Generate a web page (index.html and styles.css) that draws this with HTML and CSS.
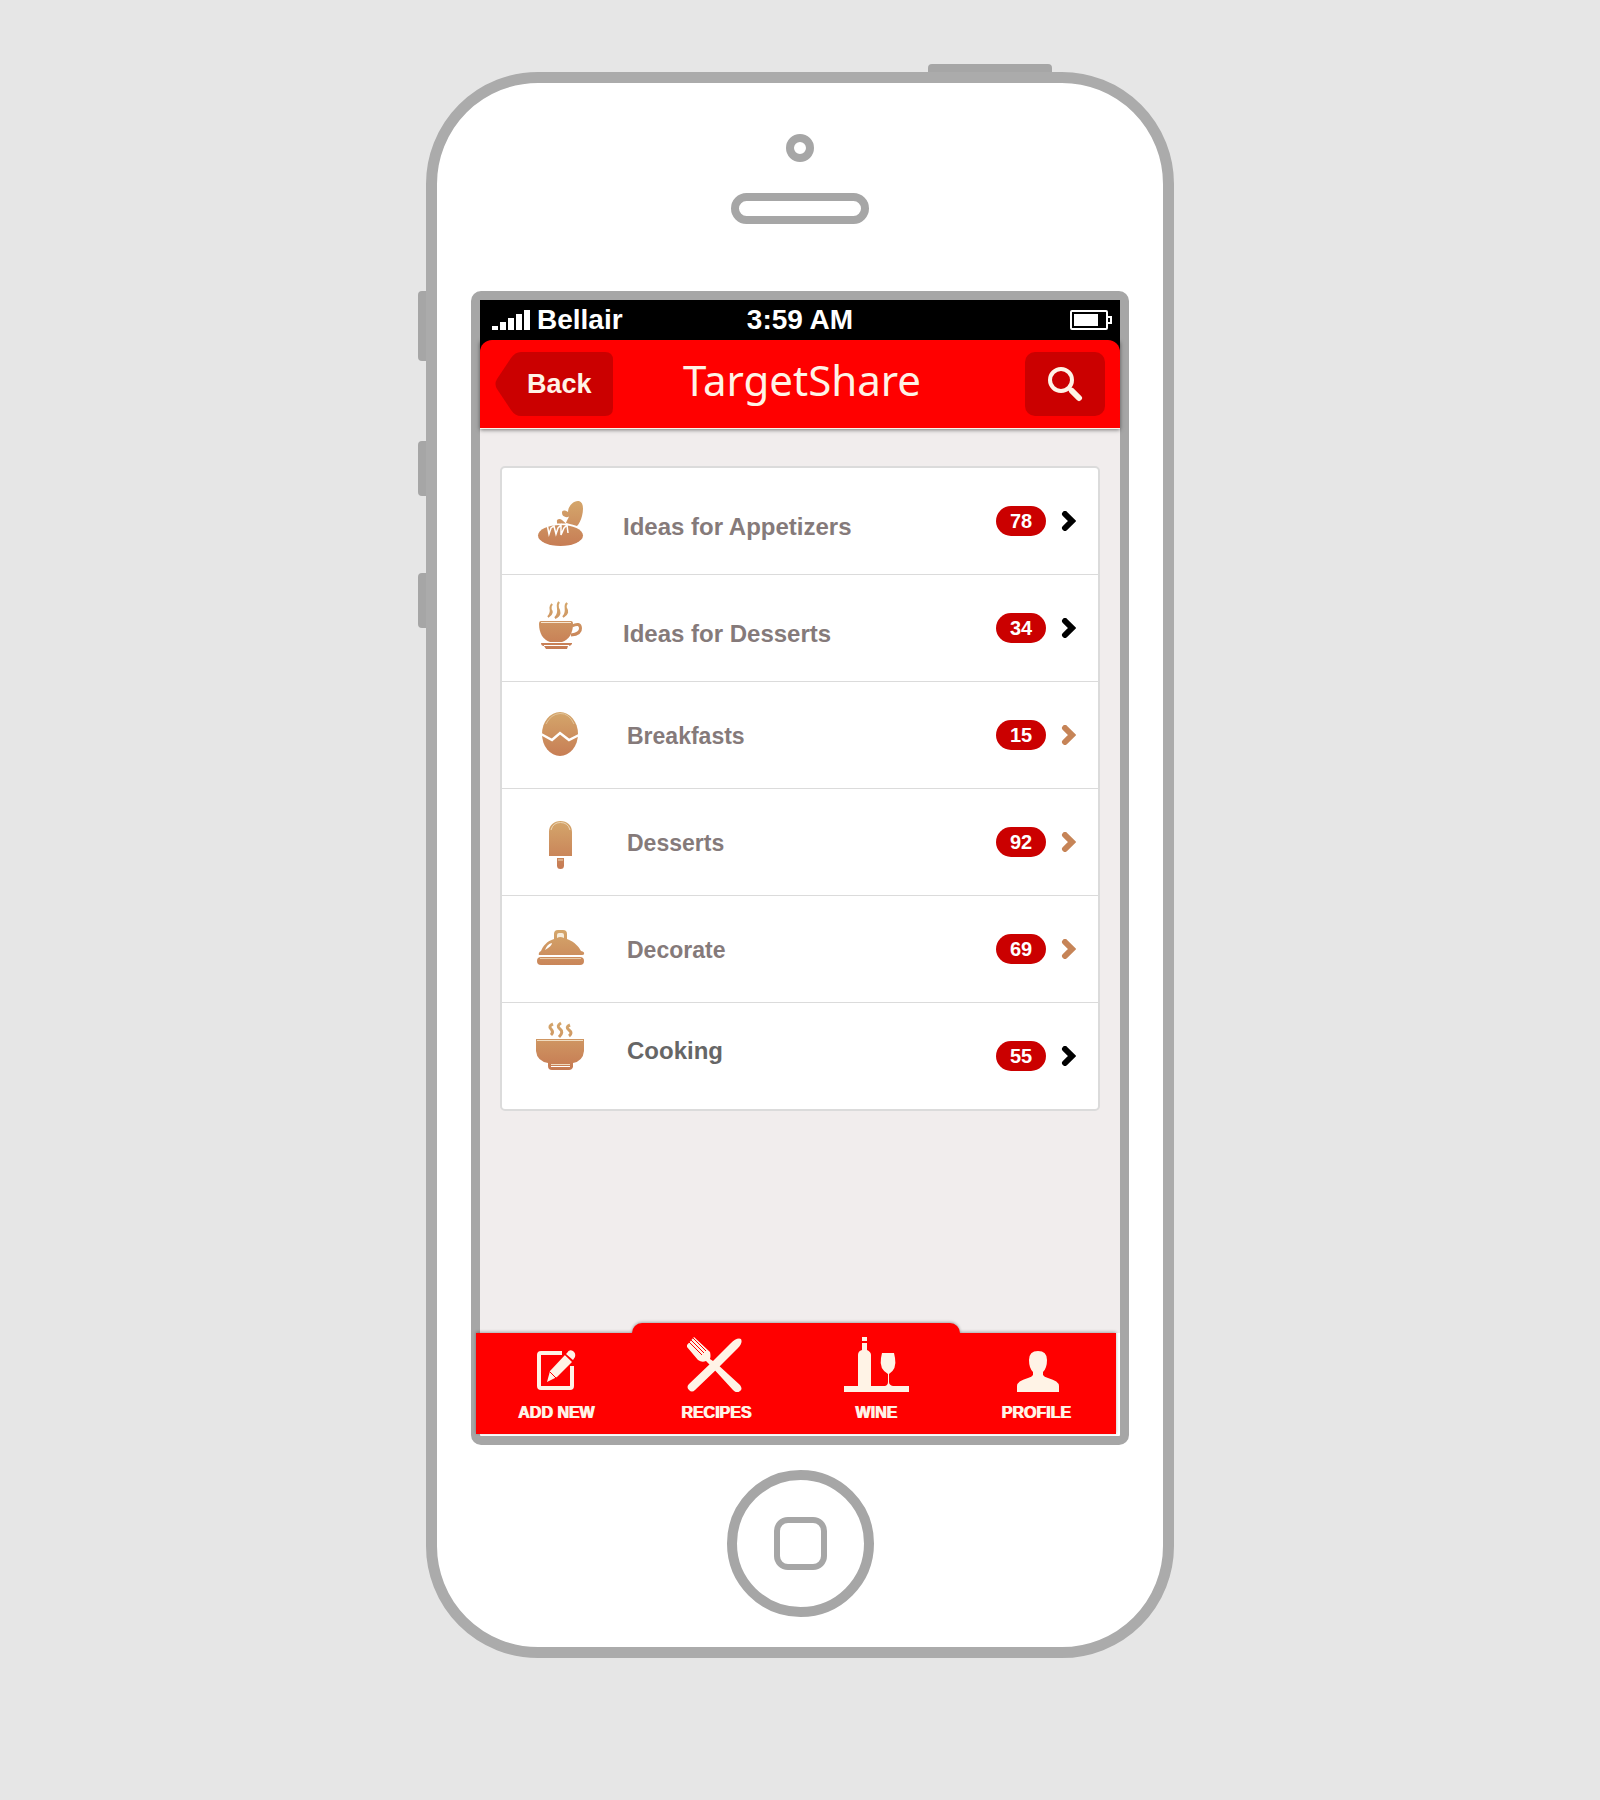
FILE: index.html
```html
<!DOCTYPE html>
<html lang="en">
<head>
<meta charset="utf-8">
<meta name="viewport" content="width=device-width, initial-scale=1">
<title>TargetShare</title>
<link rel="stylesheet" href="styles.css">
</head>
<body>
<svg class="defs" aria-hidden="true">
  <defs>
    <linearGradient id="crust" gradientUnits="userSpaceOnUse" x1="0" y1="0" x2="0" y2="48">
      <stop offset="0" stop-color="#d4a66b"/>
      <stop offset="1" stop-color="#c67a53"/>
    </linearGradient>
  </defs>
</svg>
<div class="phone">
  <span class="key key-power"></span>
  <span class="key key-mute"></span>
  <span class="key key-up"></span>
  <span class="key key-down"></span>
  <span class="camera"></span>
  <span class="speaker"></span>

  <div class="screen">
    <div class="status">
      <div class="carrier">
        <svg width="38" height="20" viewBox="0 0 38 20" fill="#fff" aria-hidden="true"><path d="M0 16h6v4H0zM8 12h6v8H8zM16 8h6v12h-6zM24 4h6v16h-6zM32 0h6v20h-6z"/></svg>
        <span>Bellair</span>
      </div>
      <span>3:59 AM</span>
      <svg class="battery" width="42" height="20" viewBox="0 0 42 20" aria-hidden="true">
        <rect x="1" y="1" width="36" height="18" rx="1" fill="none" stroke="#fff" stroke-width="2"/>
        <rect x="4" y="4" width="24" height="12" fill="#fff"/>
        <path d="M38 7h3v6h-3" fill="none" stroke="#fff" stroke-width="2"/>
      </svg>
    </div>

    <div class="header-wrap">
      <header class="header">
        <button class="back" type="button">
          <svg class="back-shape" width="118" height="64" viewBox="0 0 118 64" aria-hidden="true"><path d="M26 0H110Q118 0 118 8V56Q118 64 110 64H26Q20 64 16 58L2 37Q-1 32 2 27L16 6Q20 0 26 0Z" fill="#cb0000"/></svg>
          <span class="back-text">Back</span>
        </button>
        <h1 class="title">TargetShare</h1>
        <button class="search" type="button" aria-label="Search">
          <svg width="36" height="36" viewBox="0 0 36 36" fill="none" stroke="#fff3e6" aria-hidden="true">
            <circle cx="14" cy="14" r="11" stroke-width="4"/>
            <path d="M22 22l3 3" stroke-width="4"/>
            <path d="M25 25l7 7" stroke-width="6" stroke-linecap="round"/>
          </svg>
        </button>
      </header>
    </div>

    <main class="main">
      <ul class="card">
        <li><a class="row row-strong row-low" href="#appetizers">
          <svg class="dish" width="60" height="72" viewBox="0 0 60 72" aria-hidden="true"><g transform="translate(8 16)" fill="url(#crust)">
            <path d="M41 0C45 1 46 7 44 15C43 19 41 23 39 25L34 23.500L28 22C28 21 30 18 31 15.500C29 17 26 16 24.500 14C23 10 25 8 30 11C30 5 36-1 41 0Z"/>
            <path d="M19 21C18 18 22 17 24 19L28 22.500H19Z"/>
            <ellipse cx="22.500" cy="34.500" rx="22.500" ry="10.500"/>
            <path d="M9 23L11 33L13 27L16 25L18 33L20 27L23 24L23 34L26 27L29 24L30 32" fill="none" stroke="#fff" stroke-width="1.500"/>
          </g></svg>
          <span class="label">Ideas for Appetizers</span>
          <span class="count">78</span>
          <svg class="chevron" width="15" height="20" viewBox="0 0 15 20" aria-hidden="true"><path d="M4 3L11 10L4 17"/></svg>
        </a></li>
        <li><a class="row row-strong row-low" href="#dessert-ideas">
          <svg class="dish" width="60" height="72" viewBox="0 0 60 72" aria-hidden="true"><g transform="translate(8 10)" fill="url(#crust)">
            <path d="M14 2C10 6 16 9 10 15C15 12 14 9 12.500 7Q12 5 14 2ZM21 0C17 4 24 10 17 16C23 13 22 9 20 6Q19 3 21 0ZM29 1C25 4 31 9 25 15C30 12 30 9 28 6Q27 4 29 1Z" stroke="url(#crust)" stroke-width="2"/>
            <path d="M1 22Q1 19 3 19H33Q35 19 35 22C35 31 31 38 24 40H12C5 38 1 31 1 22Z"/>
            <path d="M3 20.500H33" stroke="#f6e8d4" stroke-width="1"/>
            <path d="M34 24Q42 20 42.500 26Q43 32 33 33" fill="none" stroke="url(#crust)" stroke-width="3"/>
            <path d="M3 41H34V42Q33 44 30 44L29 47H8L6 44Q3 44 3 41Z"/>
            <path d="M6 43.500H31" stroke="#fff" stroke-width="1"/>
          </g></svg>
          <span class="label">Ideas for Desserts</span>
          <span class="count">34</span>
          <svg class="chevron" width="15" height="20" viewBox="0 0 15 20" aria-hidden="true"><path d="M4 3L11 10L4 17"/></svg>
        </a></li>
        <li><a class="row" href="#breakfasts">
          <svg class="dish" width="60" height="72" viewBox="0 0 60 72" aria-hidden="true"><g transform="translate(12 13)" fill="url(#crust)">
            <ellipse cx="18" cy="22" rx="18" ry="22"/>
            <path d="M4 12Q9 2 18 1.500T32 12" fill="none" stroke="#e3c49a" stroke-width="1"/>
            <path d="M-1 22L10 28L18 21L27 28L37 23" fill="none" stroke="#fff" stroke-width="2.500"/>
          </g></svg>
          <span class="label">Breakfasts</span>
          <span class="count">15</span>
          <svg class="chevron" width="15" height="20" viewBox="0 0 15 20" aria-hidden="true"><path d="M4 3L11 10L4 17"/></svg>
        </a></li>
        <li><a class="row" href="#desserts">
          <svg class="dish" width="60" height="72" viewBox="0 0 60 72" aria-hidden="true"><g transform="translate(19 15)" fill="url(#crust)">
            <path d="M0 35V11C0 4 5 0 11.500 0S23 4 23 11V35ZM8 37H15V44.500A3.500 3.500 0 0 1 8 44.500Z"/>
            <path d="M2 9Q4 1.500 11.500 1.500T21 9M9 39H14" fill="none" stroke="#ecd5b5" stroke-width="1"/>
          </g></svg>
          <span class="label">Desserts</span>
          <span class="count">92</span>
          <svg class="chevron" width="15" height="20" viewBox="0 0 15 20" aria-hidden="true"><path d="M4 3L11 10L4 17"/></svg>
        </a></li>
        <li><a class="row" href="#decorate">
          <svg class="dish" width="60" height="72" viewBox="0 0 60 72" aria-hidden="true"><g transform="translate(7 17)" fill="url(#crust)">
            <path d="M17 9V4Q17 0 21 0H26Q30 0 30 4V9C38 12 42 17 44 21Q48 22 47 24Q47 25 45 25H3Q1 25 2 23Q2 22 4 21C6 16 10 11 17 9Z"/>
            <rect y="27" width="47" height="8" rx="4"/>
            <path d="M20 8V5Q20 3 22 3H25Q27 3 27 5V8Q23 6 20 8Z" fill="#f7eddc"/>
            <path d="M8 20Q10 14 15 13Q15 16 8 20Z" fill="#fff"/>
            <path d="M3 28.500H44" stroke="#e8cba8" stroke-width="1"/>
          </g></svg>
          <span class="label">Decorate</span>
          <span class="count">69</span>
          <svg class="chevron" width="15" height="20" viewBox="0 0 15 20" aria-hidden="true"><path d="M4 3L11 10L4 17"/></svg>
        </a></li>
        <li><a class="row row-strong row-high" href="#cooking">
          <svg class="dish" width="60" height="72" viewBox="0 0 60 72" aria-hidden="true"><g transform="translate(6 2)" fill="url(#crust)">
            <path d="M17 2Q12 4 15 7T15 13M25 1Q20 4 24 7T23 15M34 3Q29 5 33 8T33 14" fill="none" stroke="url(#crust)" stroke-width="3"/>
            <path d="M0 17H48V29Q47 39 37 41V45Q36 48 33 48H16Q12 48 12 44V41Q1 39 0 29Z"/>
            <path d="M1 18.500H47M15 42.500H34" stroke="#f0dcc0" stroke-width="1"/>
            <path d="M15 44.500H34" stroke="#fff" stroke-width="1"/>
          </g></svg>
          <span class="label">Cooking</span>
          <span class="count">55</span>
          <svg class="chevron" width="15" height="20" viewBox="0 0 15 20" aria-hidden="true"><path d="M4 3L11 10L4 17"/></svg>
        </a></li>
      </ul>
    </main>

    <nav class="tabs">
      <a class="tab" href="#add">
        <svg width="66" height="56" viewBox="0 0 66 56" aria-hidden="true">
          <path d="M39 17H18Q16 17 16 19V50Q16 52 18 52H47Q49 52 49 50V30" fill="none" stroke="#fff3e6" stroke-width="4"/>
          <path d="M24 46L27 35L42 19L49 26L34 41Z"/>
          <path d="M44 17Q46 13 50 15Q53 17 52 21L50 24L43 18Z"/>
          <path d="M27 36L33 42M41.500 18L50 26" stroke="#f00" stroke-width="1"/>
        </svg>
        <span>ADD NEW</span>
      </a>
      <a class="tab" href="#recipes">
        <svg width="66" height="56" viewBox="0 0 66 56" aria-hidden="true">
          <path d="M58 3Q60 7 55 12L35 32L12 54Q9 57 6 54Q3 51 6 48L28 27L47 8Q54 1 58 3Z"/>
          <path d="M4 9L11 1L27 16Q28 20 27 23L33 27L57 49Q60 53 57 55Q54 58 50 54L28 30L23 25Q19 27 15 24L4 11Z"/>
          <path d="M6 6L19 19M8 4L21 17M10 2L23 15" stroke="#f00" stroke-width="1"/>
        </svg>
        <span>RECIPES</span>
      </a>
      <a class="tab" href="#wine">
        <svg width="66" height="56" viewBox="0 0 66 56" aria-hidden="true">
          <path d="M19 1H24V5H19ZM19 7H24V14Q28 16 28 19V50H42Q45 49 45 46V38Q36 33 38 22L39 17H51L52 22Q54 33 46 38V46Q46 49 50 50H66V56H1V50H15V19Q15 15 19 14Z"/>
        </svg>
        <span>WINE</span>
      </a>
      <a class="tab" href="#profile">
        <svg width="66" height="56" viewBox="0 0 66 56" aria-hidden="true">
          <path d="M35 15Q44 15 44 24Q44 32 40 36V39Q41 41 45 42Q56 45 56 50V56H14V50Q14 45 25 42Q29 41 30 39V36Q26 32 26 24Q26 15 35 15Z"/>
        </svg>
        <span>PROFILE</span>
      </a>
    </nav>
  </div>

  <button class="home" type="button" aria-label="Home"><span class="home-mark"></span></button>
</div>
</body>
</html>
```
FILE: styles.css
```css
* {
  box-sizing: border-box;
}

body {
  margin: 0;
  min-height: 100vh;
  padding: 72px 16px;
  background: #e6e6e6;
  font-family: "Liberation Sans", Arial, sans-serif;
  font-weight: bold;
}

button {
  border: 0;
  padding: 0;
  background: none;
  font: inherit;
  cursor: pointer;
}

a {
  color: inherit;
  text-decoration: none;
}

svg {
  display: block;
  flex: none;
}

.defs {
  position: absolute;
  width: 0;
  height: 0;
}

/* Handset */

.phone {
  position: relative;
  display: flex;
  flex-direction: column;
  align-items: center;
  max-width: 748px;
  margin: 0 auto;
  padding: 51px 34px 30px;
  border: 11px solid #ababab;
  border-radius: 112px;
  background: #fff;
}

.key {
  position: absolute;
  left: -19px;
  width: 8px;
  border-radius: 4px 0 0 4px;
  background: #a6a6a6;
}

.key-power {
  top: -19px;
  right: 111px;
  left: auto;
  width: 124px;
  height: 8px;
  border-radius: 4px 4px 0 0;
}

.key-mute {
  top: 208px;
  height: 70px;
}

.key-up {
  top: 358px;
  height: 55px;
}

.key-down {
  top: 490px;
  height: 55px;
}

.camera {
  width: 28px;
  height: 28px;
  border: 8px solid #a6a6a6;
  border-radius: 50%;
}

.speaker {
  width: 138px;
  height: 31px;
  margin: 31px 0 67px;
  border: 8px solid #a6a6a6;
  border-radius: 16px;
}

.screen {
  display: flex;
  flex-direction: column;
  align-self: stretch;
  padding-bottom: 2px;
  border: 9px solid #a6a6a6;
  border-radius: 10px;
}

.home {
  display: flex;
  align-items: center;
  justify-content: center;
  width: 147px;
  height: 147px;
  margin-top: 25px;
  border: 10px solid #a6a6a6;
  border-radius: 50%;
}

.home-mark {
  width: 53px;
  height: 53px;
  border: 6px solid #a6a6a6;
  border-radius: 14px;
}

/* Status bar and header */

.status {
  display: grid;
  grid-template-columns: 1fr auto 1fr;
  align-items: center;
  height: 40px;
  padding: 0 8px 0 12px;
  background: #000;
  color: #fff;
  font-size: 28px;
  line-height: 40px;
}

.status > span {
  padding-right: 4px;
}

.carrier {
  display: flex;
  align-items: center;
  gap: 7px;
}

.battery {
  justify-self: end;
}

.header-wrap {
  position: relative;
  background: linear-gradient(#000 50%, #f1eded 50%);
  box-shadow: 0 1px 0 #fdf3ea, 0 2px 4px rgba(0, 0, 0, 0.5);
}

.header {
  display: flex;
  align-items: center;
  justify-content: space-between;
  padding: 12px 15px;
  border-radius: 12px 12px 0 0;
  background: #f00;
  color: #fff3e6;
}

.back {
  position: relative;
  width: 118px;
  height: 64px;
  padding-left: 32px;
  color: inherit;
  font-size: 27px;
  text-align: left;
}

.back-shape {
  position: absolute;
  inset: 0;
}

.back-text {
  position: relative;
}

.title {
  flex: 1;
  margin: 0;
  padding: 0 72px 8px 38px;
  font: 42px/56px "Noto Sans", sans-serif;
  text-align: center;
}

.search {
  display: flex;
  align-items: center;
  justify-content: center;
  width: 80px;
  height: 64px;
  border-radius: 10px;
  background: #cb0000;
}

/* Category list */

.main {
  flex: 1;
  min-height: 905px;
  padding: 38px 20px;
  background: #f1eded;
}

.card {
  margin: 0;
  padding: 0;
  border: 2px solid #dbdbdb;
  border-radius: 5px;
  background: #fff;
  list-style: none;
}

.card li + li {
  border-top: 1px solid #dbdbdb;
}

.row {
  display: flex;
  align-items: center;
  min-height: 106px;
  padding: 0 22px 0 28px;
  color: #857a7a;
  font-size: 23px;
  line-height: 28px;
}

.row-strong {
  font-size: 24px;
}

.label {
  flex: 1;
  padding: 2px 0 0 37px;
}

.row-low .label {
  padding: 12px 0 0 33px;
}

.row-high .label {
  padding-top: 0;
  padding-bottom: 10px;
  color: #666;
}

.count {
  width: 50px;
  margin-right: 15px;
  border-radius: 15px;
  background: #cb0000;
  color: #fff;
  font-size: 20px;
  line-height: 30px;
  text-align: center;
}

.chevron {
  fill: none;
  stroke: #c68457;
  stroke-width: 6;
  stroke-linecap: round;
}

.row-strong .chevron {
  stroke: #000;
}

/* Tab bar: sits slightly left of the screen, over the bezel */

.tabs {
  position: relative;
  display: grid;
  grid-template-columns: repeat(4, 1fr);
  margin: 0 4px 0 -4px;
  background: #f00;
  box-shadow: 0 -1px 3px rgba(0, 0, 0, 0.3);
  color: #fff3e6;
  font-size: 16px;
  line-height: 20px;
  text-shadow: 1px 0 0 currentColor;
}

.tabs::before {
  content: "";
  position: absolute;
  top: -10px;
  right: 156px;
  left: 156px;
  height: 20px;
  border-radius: 10px 10px 0 0;
  background: #f00;
  box-shadow: 0 -1px 3px rgba(0, 0, 0, 0.3);
  clip-path: inset(-6px -6px 10px);
}

.tab {
  position: relative;
  display: flex;
  flex-direction: column;
  align-items: center;
  gap: 11px;
  padding: 3px 0 11px;
  fill: #fff3e6;
}
```
